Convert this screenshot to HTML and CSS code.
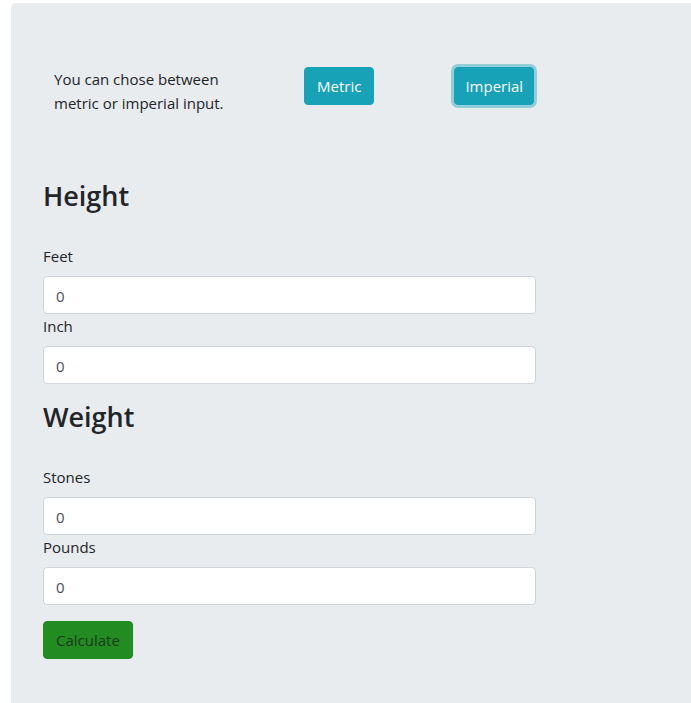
FILE: index.html
```html
<!DOCTYPE html>
<html lang="en">
<head>
<meta charset="utf-8">
<title>BMI</title>
<link rel="stylesheet" href="styles.css">
</head>
<body>
<div class="jumbotron">
  <div class="intro">
    <div class="intro-text"><p>You can chose between metric or imperial input.</p></div>
    <button class="btn btn-info">Metric</button>
    <button class="btn btn-info btn-focus">Imperial</button>
  </div>
  <form class="form">
    <h3 class="section-title first">Height</h3>
    <label class="label" for="feet">Feet</label>
    <input class="input" id="feet" type="text" value="0">
    <label class="label" for="inch">Inch</label>
    <input class="input" id="inch" type="text" value="0">
    <h3 class="section-title">Weight</h3>
    <label class="label" for="stones">Stones</label>
    <input class="input" id="stones" type="text" value="0">
    <label class="label" for="pounds">Pounds</label>
    <input class="input" id="pounds" type="text" value="0">
    <button type="button" class="btn btn-calc">Calculate</button>
  </form>
</div>
</body>
</html>
```
FILE: styles.css
```css
html, body {
  overflow: hidden;
}
body {
  margin: 3px 0 0 11px;
  font-family: "Open Sans", "Noto Sans", sans-serif;
  font-size: 16px;
  line-height: 24px;
  color: #212529;
  background: #fff;
}
.jumbotron {
  background: #e9ecef;
  border-radius: 5px 0 0 5px;
  padding: 64px 32px;
}
.intro {
  display: flex;
  align-items: flex-start;
}
.intro-text {
  width: 261px;
  padding-left: 11px;
  box-sizing: border-box;
}
.intro-text p {
  margin: 0;
  max-width: 200px;
  font-size: 15px;
}
.btn {
  font-family: inherit;
  font-size: 15px;
  line-height: 24px;
  padding: 6px 12px;
  border: 1px solid transparent;
  border-radius: 4px;
  cursor: pointer;
}
.btn-info {
  background: #17a2b8;
  border-color: #17a2b8;
  color: #fff;
}
.btn-focus {
  margin-left: 80px;
  padding: 6px 10px;
  box-shadow: 0 0 0 3px rgba(58, 176, 195, 0.5);
}
.form {
  width: 493px;
  display: flex;
  flex-direction: column;
  align-items: flex-start;
}
.section-title {
  font-size: 27px;
  font-weight: 600;
  line-height: 34px;
  margin: 16px 0 31px;
}
.section-title.first {
  margin-top: 64px;
}
.label {
  display: block;
  margin-bottom: 8px;
  font-size: 15px;
}
.input {
  width: 100%;
  box-sizing: border-box;
  height: 38px;
  padding: 7px 12px 5px;
  font-family: inherit;
  font-size: 15px;
  line-height: 24px;
  color: #495057;
  background: #fff;
  border: 1px solid #ced4da;
  border-radius: 4px;
}
.btn-calc {
  margin-top: 16px;
  background: #228b22;
  border-color: #228b22;
  color: #1c3a1c;
}
```
